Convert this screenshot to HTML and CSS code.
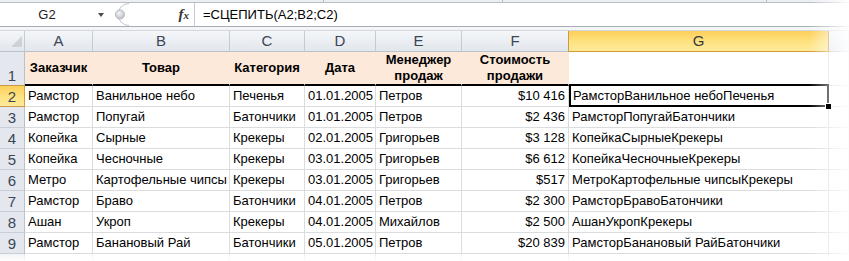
FILE: index.html
```html
<!DOCTYPE html>
<html lang="ru">
<head>
    <meta charset="UTF-8">
    <title>СЦЕПИТЬ</title>
    <link rel="stylesheet" href="styles.css">
</head>
<body>
    <div class="sheet">
        <div class="ribbon-edge">
            <span class="seg seg-1"></span>
            <span class="seg seg-2"></span>
            <span class="seg seg-3"></span>
        </div>
        <div class="formula-bar">
            <div class="name-box">
                <span class="name">G2</span>
                <span class="arrow"></span>
            </div>
            <div class="fx-area">
                <svg class="grip" width="20" height="23" viewBox="0 0 20 23">
                    <defs>
                        <radialGradient id="dot" cx="0.4" cy="0.35" r="0.7">
                            <stop offset="0" stop-color="#f4f5f7"/>
                            <stop offset="1" stop-color="#b9bdc3"/>
                        </radialGradient>
                    </defs>
                    <path d="M19 0.5 A11 11 0 0 0 19 22.5" fill="none" stroke="#bfc4cb"/>
                    <circle cx="10" cy="11.5" r="4.5" fill="url(#dot)" stroke="#b3b8bf"/>
                </svg>
                <span class="fx">f<span class="fx-x">x</span></span>
            </div>
            <div class="formula">=СЦЕПИТЬ(A2;B2;C2)</div>
        </div>
        <div class="gap"></div>
        <div class="grid" id="grid"></div>
        <div class="fade-right"></div>
        <div class="fade-bottom"></div>
    </div>
    <script>
        const cols = ['A', 'B', 'C', 'D', 'E', 'F', 'G'];
        const headers = ['Заказчик', 'Товар', 'Категория', 'Дата', 'Менеджер продаж', 'Стоимость продажи'];
        const rows = [
            ['Рамстор', 'Ванильное небо', 'Печенья', '01.01.2005', 'Петров', '$10 416'],
            ['Рамстор', 'Попугай', 'Батончики', '01.01.2005', 'Петров', '$2 436'],
            ['Копейка', 'Сырные', 'Крекеры', '02.01.2005', 'Григорьев', '$3 128'],
            ['Копейка', 'Чесночные', 'Крекеры', '03.01.2005', 'Григорьев', '$6 612'],
            ['Метро', 'Картофельные чипсы', 'Крекеры', '03.01.2005', 'Григорьев', '$517'],
            ['Рамстор', 'Браво', 'Батончики', '04.01.2005', 'Петров', '$2 300'],
            ['Ашан', 'Укроп', 'Крекеры', '04.01.2005', 'Михайлов', '$2 500'],
            ['Рамстор', 'Банановый Рай', 'Батончики', '05.01.2005', 'Петров', '$20 839']
        ];

        let html = `<div class="corner">
            <svg width="24" height="20" viewBox="0 0 24 20"><polygon points="22,5 22,16 11,16" fill="#cdd2d9"/></svg>
        </div>`;
        cols.forEach(c => {
            html += `<div class="ch${c === 'G' ? ' ch-sel' : ''}">${c}</div>`;
        });
        html += '<div class="ch"></div>';

        // header row
        html += '<div class="rh">1</div>';
        headers.forEach(h => {
            html += `<div class="cell head">${h}</div>`;
        });
        html += '<div class="cell"></div><div class="cell"></div>';

        rows.forEach((r, i) => {
            const n = i + 2;
            html += `<div class="rh${n === 2 ? ' rh-sel' : ''}">${n}</div>`;
            r.forEach((v, j) => {
                html += `<div class="cell${j === 5 ? ' num' : ''}">${v}</div>`;
            });
            html += `<div class="cell${n === 2 ? ' sel' : ''}">${r[0] + r[1] + r[2]}</div>`;
            html += '<div class="cell"></div>';
        });

        // row 10 is only a sliver at the bottom edge
        html += '<div class="rh"></div>' + '<div class="cell"></div>'.repeat(8);
        document.getElementById('grid').innerHTML = html;
    </script>
</body>
</html>
```

FILE: styles.css
```css
html, body {
    margin: 0;
    padding: 0;
    width: 849px;
    height: 261px;
    overflow: hidden;
    background: #fff;
    font-family: "Liberation Sans", Arial, sans-serif;
}
.sheet {
    position: relative;
    height: 261px;
    overflow: hidden;
}
.ribbon-edge {
    display: flex;
    height: 2px;
    background: #eceef1;
    border-bottom: 1px solid #b9bec6;
}
.seg {
    border-right: 1px solid #b9bec6;
}
.seg-1 { width: 323px; }
.seg-2 { width: 178px; }
.seg-3 { width: 263px; }

.formula-bar {
    display: flex;
    height: 23px;
    border-bottom: 1px solid #a7adb6;
    background: #fff;
}
.name-box {
    width: 108px;
    display: flex;
    align-items: center;
}
.name {
    width: 94px;
    text-align: center;
    font-size: 13px;
    color: #1e1e1e;
}
.arrow {
    margin-left: 4px;
    width: 0;
    height: 0;
    border-left: 3.5px solid transparent;
    border-right: 3.5px solid transparent;
    border-top: 4px solid #4a4a4a;
}
.fx-area {
    width: 86px;
    display: flex;
    align-items: center;
    border-right: 1px solid #c6cbd2;
}
.grip {
    margin-left: 2px;
}
.fx {
    margin-left: auto;
    margin-right: 5px;
    font-family: "Liberation Serif", "Times New Roman", serif;
    font-style: italic;
    font-weight: bold;
    font-size: 15px;
    color: #333;
}
.fx-x {
    font-size: 11px;
}
.formula {
    flex: 1;
    padding-left: 8px;
    font-size: 13px;
    line-height: 23px;
    color: #000;
}
.gap {
    height: 3px;
    background: #f4f5f7;
    border-bottom: 1px solid #d3d8de;
}

.grid {
    display: grid;
    grid-template-columns: 25px 68px 137px 75px 71px 86px 107px 260px 1fr;
    grid-template-rows: 21px 34px repeat(9, 21px);
}
.corner, .ch {
    box-sizing: border-box;
    background: linear-gradient(#f4f6f9, #e2e7ed);
    border-right: 1px solid #c5cbd3;
    border-bottom: 1px solid #b9c1cb;
}
.ch {
    text-align: center;
    font-size: 15px;
    line-height: 20px;
    color: #3d4654;
}
.ch-sel {
    background: linear-gradient(#fccf5a, #fee485 60%, #fde99a);
    border-right-color: #c99a48;
    border-left: 1px solid #c99a48;
    border-bottom: 1px solid #d89a34;
    margin-left: -1px;
    color: #3a3a3a;
}
.rh {
    box-sizing: border-box;
    background: #e4e8ee;
    border-right: 1px solid #b9c1cb;
    border-bottom: 1px solid #c8ced6;
    font-size: 15px;
    color: #3b4656;
    text-align: center;
    display: flex;
    align-items: flex-end;
    justify-content: center;
    line-height: 19px;
}
.rh-sel {
    background: linear-gradient(#fccf5a, #fee485 60%, #fde99a);
    border-bottom-color: #c99a48;
    border-right-color: #d89a34;
    border-top: 1px solid #c99a48;
    margin-top: -1px;
}
.cell {
    box-sizing: border-box;
    border-right: 1px solid #dadcdd;
    border-bottom: 1px solid #dadcdd;
    font-size: 13px;
    line-height: 20px;
    padding: 0 3px;
    white-space: nowrap;
    color: #000;
}
.num {
    text-align: right;
}
.head {
    background: #fde9d9;
    border-right-color: #fde9d9;
    border-bottom: 2px solid #000;
    font-weight: bold;
    white-space: normal;
    line-height: 16px;
    display: flex;
    align-items: center;
    justify-content: center;
    text-align: center;
    padding: 0 2px 1px;
}
.sel {
    position: relative;
    padding-left: 4px;
}
.sel::after {
    content: "";
    position: absolute;
    left: 0;
    top: -2px;
    right: -1px;
    bottom: -1px;
    border: 2px solid #000;
}
.sel::before {
    content: "";
    position: absolute;
    right: -4px;
    bottom: -4px;
    width: 5px;
    height: 5px;
    background: #000;
    border: 1px solid #fff;
    z-index: 1;
}

.fade-right {
    position: absolute;
    top: 0;
    left: 809px;
    width: 40px;
    height: 100%;
    background: linear-gradient(to right, rgba(255, 255, 255, 0), rgba(255, 255, 255, 0.93));
    pointer-events: none;
}
.fade-bottom {
    position: absolute;
    left: 0;
    top: 254px;
    width: 100%;
    height: 7px;
    background: linear-gradient(rgba(255, 255, 255, 0.55), rgba(255, 255, 255, 0.95));
    pointer-events: none;
}
```
